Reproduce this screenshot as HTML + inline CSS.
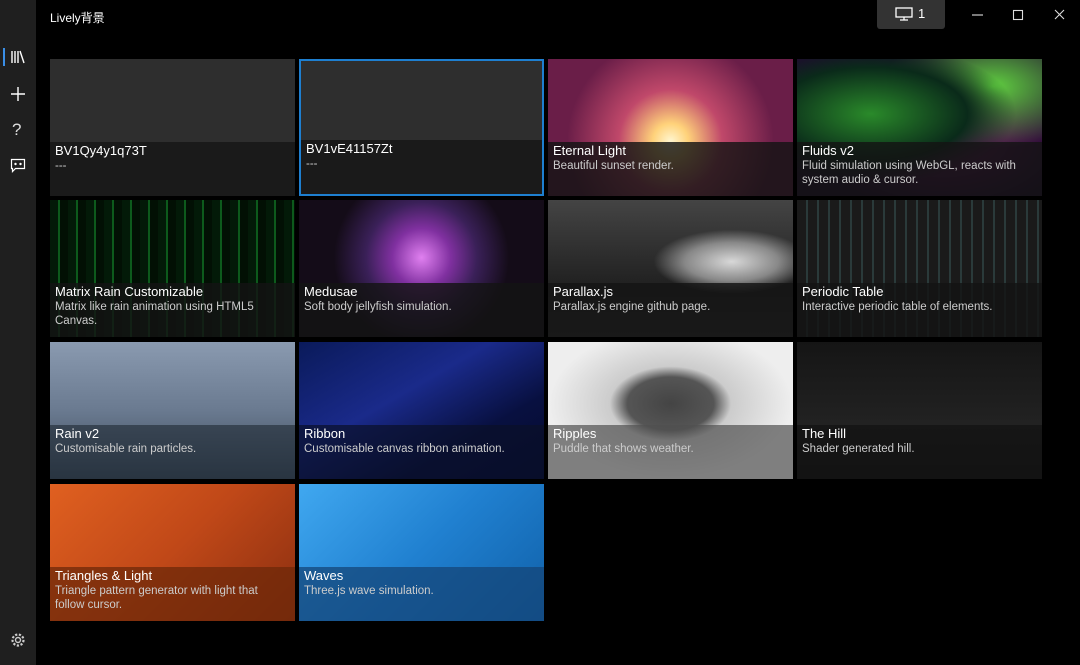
<!DOCTYPE html>
<html><head><meta charset="utf-8"><style>
*{margin:0;padding:0;box-sizing:border-box}
body{width:1080px;height:665px;background:#000;font-family:"Liberation Sans","Noto Sans CJK SC",sans-serif;color:#fff;position:relative;overflow:hidden}
.side{position:absolute;left:0;top:0;width:36px;height:665px;background:#1f1f1f}
.title{position:absolute;left:50px;top:9px;font-size:12px;color:#fff}
.mon{position:absolute;left:877px;top:0;width:68px;height:29px;background:#333;border-radius:0 0 3px 3px;font-size:13px}
.tile{position:absolute;width:245px;height:137px;overflow:hidden}
.ov{position:absolute;left:0;right:0;bottom:0;height:54px;background:rgba(20,20,20,.82);padding:1px 5px}
.t{font-size:13px;line-height:16px;color:#fff}
.d{font-size:11.5px;line-height:14px;color:#ccc}
.sel{outline:2px solid #1e7fd0;outline-offset:-2px}
</style></head><body>
<div class="side">
<div style="position:absolute;left:3px;top:48px;width:2px;height:18px;background:#3a8ee6"></div>
<svg style="position:absolute;left:10px;top:50px" width="16" height="14" viewBox="0 0 16 14" fill="none" stroke="#fff" stroke-width="1.4"><path d="M2 1v12M5 1v12M8 1v12M10 1l4 12"/></svg>
<svg style="position:absolute;left:10px;top:86px" width="16" height="16" stroke="#fff" stroke-width="1.4"><path d="M8 1v14M1 8h14"/></svg>
<div style="position:absolute;left:12px;top:120px;font-size:17px;color:#ddd">?</div>
<svg style="position:absolute;left:10px;top:158px" width="16" height="16" fill="none" stroke="#fff" stroke-width="1.2"><path d="M1.5 1.5h13v9h-9l-3 3v-3h-1z"/><circle cx="5.5" cy="6" r=".6" fill="#fff"/><circle cx="10.5" cy="6" r=".6" fill="#fff"/></svg>
<svg style="position:absolute;left:10px;top:632px" width="16" height="16" fill="none" stroke="#ccc" stroke-width="1.4"><circle cx="8" cy="8" r="2.5"/><circle cx="8" cy="8" r="5.5" stroke-dasharray="2.2 1.6" stroke-width="2.2"/></svg>
</div>
<div class="title">Lively背景</div>
<div class="mon"><svg style="position:absolute;left:18px;top:7px" width="18" height="14" fill="none" stroke="#fff" stroke-width="1.3"><rect x="1" y="1" width="16" height="9"/><path d="M9 10v3M5 13h8"/></svg><span style="position:absolute;left:41px;top:6px">1</span></div>
<svg style="position:absolute;left:972px;top:8px" width="100" height="14" stroke="#ddd" stroke-width="1.1" fill="none"><path d="M0 7h11"/><rect x="41.5" y="2.5" width="9" height="9"/><path d="M83 2l9 9M92 2l-9 9"/></svg>

<div class="tile" style="left:50px;top:59px;background:#2e2e2e"><div class="ov" style="background:#1a1a1a"><div class="t">BV1Qy4y1q73T</div><div class="d">---</div></div></div>
<div class="tile sel" style="left:299px;top:59px;background:#2e2e2e"><div class="ov" style="background:#1a1a1a;left:2px;right:2px;bottom:2px"><div class="t">BV1vE41157Zt</div><div class="d">---</div></div></div>
<div class="tile" style="left:548px;top:59px;background:radial-gradient(circle at 50% 60%,#fff6d0 0,#ffd27a 12%,#c0486a 35%,#6a1e48 70%),linear-gradient(#3a1a48,#c04070)"><div class="ov"><div class="t">Eternal Light</div><div class="d">Beautiful sunset render.</div></div></div>
<div class="tile" style="left:797px;top:59px;background:radial-gradient(ellipse at 30% 40%,#2a8a2a,#0a2a1a 40%,transparent 60%),radial-gradient(ellipse at 80% 20%,#60d040,transparent 40%),radial-gradient(ellipse at 60% 60%,#701a60,#200830 60%)"><div class="ov"><div class="t">Fluids v2</div><div class="d">Fluid simulation using WebGL, reacts with system audio &amp; cursor.</div></div></div>

<div class="tile" style="left:50px;top:200px;background:repeating-linear-gradient(90deg,#031a08 0 8px,#0d5a1c 8px 10px,#021004 10px 18px)"><div class="ov"><div class="t">Matrix Rain Customizable</div><div class="d">Matrix like rain animation using HTML5 Canvas.</div></div></div>
<div class="tile" style="left:299px;top:200px;background:radial-gradient(circle at 50% 42%,#e080f0 0,#8030a0 20%,#3a2058 38%,#140c18 60%)"><div class="ov"><div class="t">Medusae</div><div class="d">Soft body jellyfish simulation.</div></div></div>
<div class="tile" style="left:548px;top:200px;background:radial-gradient(ellipse at 75% 45%,#d8d8d8 0,#888 18%,transparent 30%),linear-gradient(#444,#222 60%,#333)"><div class="ov"><div class="t">Parallax.js</div><div class="d">Parallax.js engine github page.</div></div></div>
<div class="tile" style="left:797px;top:200px;background:repeating-linear-gradient(90deg,#1a1a1a 0 9px,#2a3a3a 9px 11px),#222"><div class="ov"><div class="t">Periodic Table</div><div class="d">Interactive periodic table of elements.</div></div></div>

<div class="tile" style="left:50px;top:342px;background:linear-gradient(#8a9ab0,#6a7a90 50%,#3a4858)"><div class="ov" style="background:rgba(30,40,50,.6)"><div class="t">Rain v2</div><div class="d">Customisable rain particles.</div></div></div>
<div class="tile" style="left:299px;top:342px;background:linear-gradient(150deg,#0a1a5a,#1a2a8a 40%,#081040 70%,#050a30)"><div class="ov" style="background:rgba(10,15,40,.7)"><div class="t">Ribbon</div><div class="d">Customisable canvas ribbon animation.</div></div></div>
<div class="tile" style="left:548px;top:342px;background:radial-gradient(ellipse at 50% 45%,#444 0,#555 25%,#ccc 35%,#eee 70%)"><div class="ov" style="background:rgba(80,80,80,.7)"><div class="t">Ripples</div><div class="d">Puddle that shows weather.</div></div></div>
<div class="tile" style="left:797px;top:342px;background:linear-gradient(#151515,#222 60%,#111)"><div class="ov"><div class="t">The Hill</div><div class="d">Shader generated hill.</div></div></div>

<div class="tile" style="left:50px;top:484px;background:linear-gradient(135deg,#e06020,#c04818 50%,#8a2e10)"><div class="ov" style="background:rgba(110,40,10,.75)"><div class="t">Triangles &amp; Light</div><div class="d">Triangle pattern generator with light that follow cursor.</div></div></div>
<div class="tile" style="left:299px;top:484px;background:linear-gradient(135deg,#40a8f0,#2080d0 50%,#1060a8)"><div class="ov" style="background:rgba(20,70,120,.75)"><div class="t">Waves</div><div class="d">Three.js wave simulation.</div></div></div>
</body></html>
